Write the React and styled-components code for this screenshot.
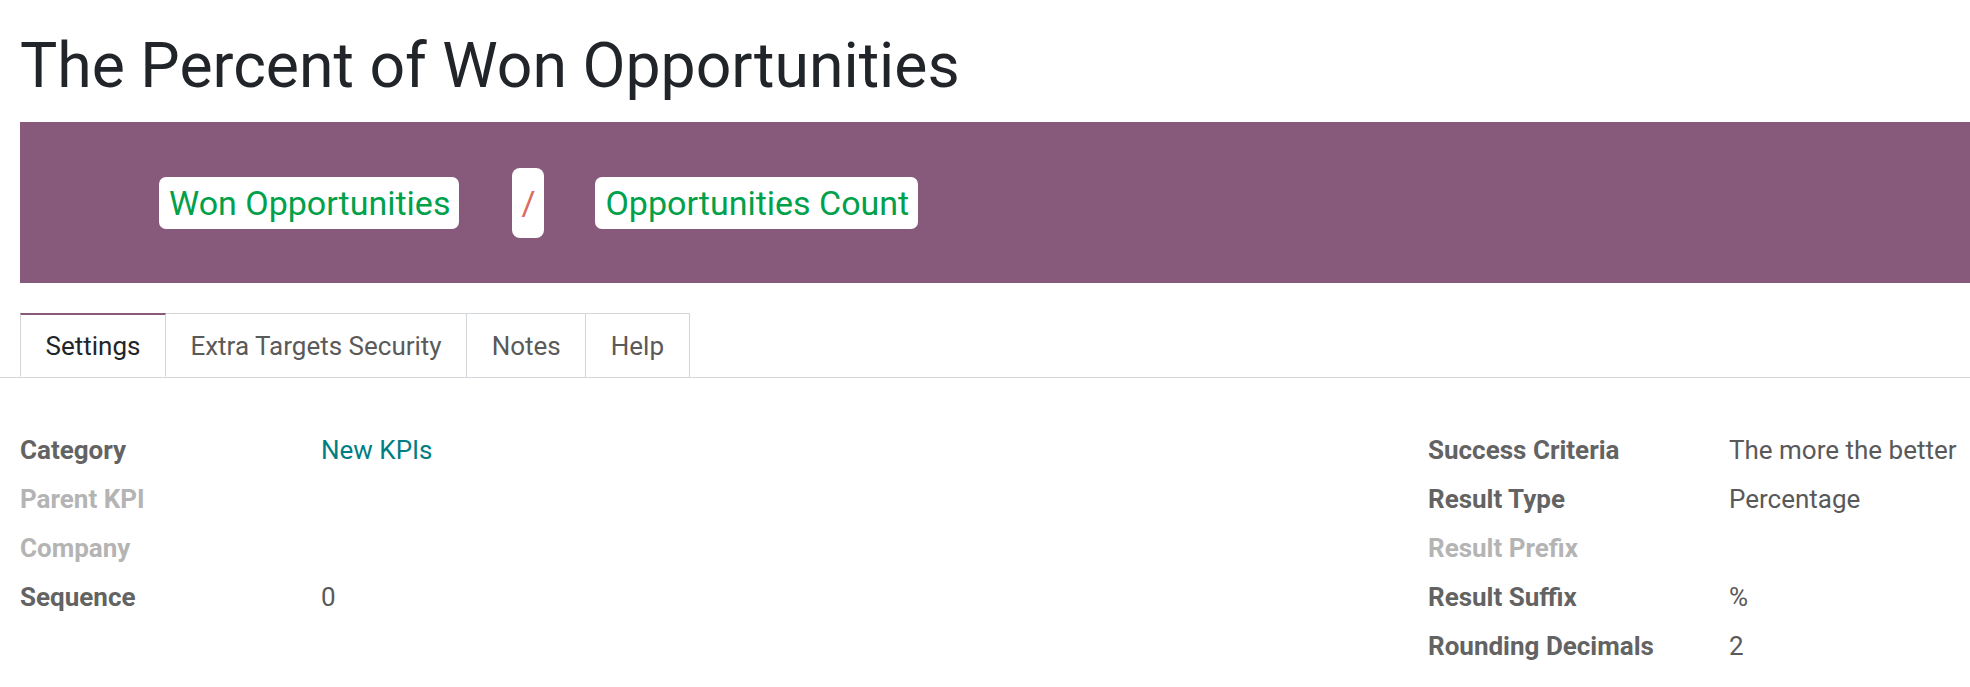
import React from "react";
import styled, { createGlobalStyle } from "styled-components";

const GlobalStyle = createGlobalStyle`
  body {
    margin: 0;
    background: #ffffff;
    font-family: Roboto, "Noto Sans", sans-serif;
  }
`;

const tabs = ["Settings", "Extra Targets Security", "Notes", "Help"];

const leftFields = [
  { label: "Category", value: "New KPIs", link: true },
  { label: "Parent KPI", muted: true },
  { label: "Company", muted: true },
  { label: "Sequence", value: "0" },
];

const rightFields = [
  { label: "Success Criteria", value: "The more the better" },
  { label: "Result Type", value: "Percentage" },
  { label: "Result Prefix", muted: true },
  { label: "Result Suffix", value: "%" },
  { label: "Rounding Decimals", value: "2" },
];

const App = () => {
  return (
    <Page>
      <GlobalStyle />
      <Title>The Percent of Won Opportunities</Title>
      <Formula>
        <Chip>Won Opportunities</Chip>
        <Operator>/</Operator>
        <Chip>Opportunities Count</Chip>
      </Formula>
      <TabBar>
        {tabs.map((tab, i) => (
          <Tab key={tab} $active={i === 0}>
            {tab}
          </Tab>
        ))}
      </TabBar>
      <Fields>
        <Group>
          {leftFields.map((f) => (
            <React.Fragment key={f.label}>
              <Label $muted={f.muted}>{f.label}</Label>
              <Value $link={f.link}>{f.value}</Value>
            </React.Fragment>
          ))}
        </Group>
        <Group>
          {rightFields.map((f) => (
            <React.Fragment key={f.label}>
              <Label $muted={f.muted}>{f.label}</Label>
              <Value>{f.value}</Value>
            </React.Fragment>
          ))}
        </Group>
      </Fields>
    </Page>
  );
};

const Page = styled.div`
  width: 1970px;
  height: 687px;
  overflow: hidden;
`;

const Title = styled.h1`
  margin: 0;
  padding: 29px 0 0 20px;
  font-size: 62.5px;
  line-height: 74px;
  font-weight: 400;
  color: #212529;
`;

const Formula = styled.div`
  margin: 19px 0 0 20px;
  height: 161px;
  background: #875a7b;
  display: flex;
  align-items: center;
  padding-left: 139px;
`;

const Chip = styled.span`
  background: #ffffff;
  border-radius: 7px;
  padding: 0 9px 0 10px;
  height: 52px;
  display: flex;
  align-items: center;
  font-size: 34px;
  color: #01a04b;
`;

const Operator = styled.span`
  margin: 0 51px 0 53px;
  background: #ffffff;
  border-radius: 8px;
  width: 32px;
  height: 70px;
  display: flex;
  align-items: center;
  justify-content: center;
  font-size: 34px;
  color: #dd6a5f;
`;

const TabBar = styled.div`
  margin-top: 30px;
  display: flex;
  padding-left: 20px;
  border-bottom: 1px solid #d3d6da;
`;

const Tab = styled.div`
  padding: 0 24.5px;
  height: 64px;
  display: flex;
  align-items: center;
  font-size: 26px;
  color: ${(p) => (p.$active ? "#212529" : "#5a5a5a")};
  background: #ffffff;
  border: 1px solid #d3d6da;
  border-top: ${(p) => (p.$active ? "2px solid #875a7b" : "1px solid #d3d6da")};
  border-bottom: ${(p) => (p.$active ? "1px solid #ffffff" : "none")};
  margin-bottom: ${(p) => (p.$active ? "-1px" : "0")};
  box-sizing: border-box;
  & + & {
    border-left: none;
  }
`;

const Fields = styled.div`
  display: grid;
  grid-template-columns: 1408px auto;
  padding: 47px 0 0 20px;
`;

const Group = styled.div`
  display: grid;
  grid-template-columns: 301px auto;
  grid-auto-rows: 49px;
  align-items: center;
  font-size: 26px;
`;

const Label = styled.div`
  font-weight: 700;
  color: ${(p) => (p.$muted ? "#b4b4b4" : "#636363")};
`;

const Value = styled.div`
  color: ${(p) => (p.$link ? "#017e84" : "#595959")};
`;

export default App;
